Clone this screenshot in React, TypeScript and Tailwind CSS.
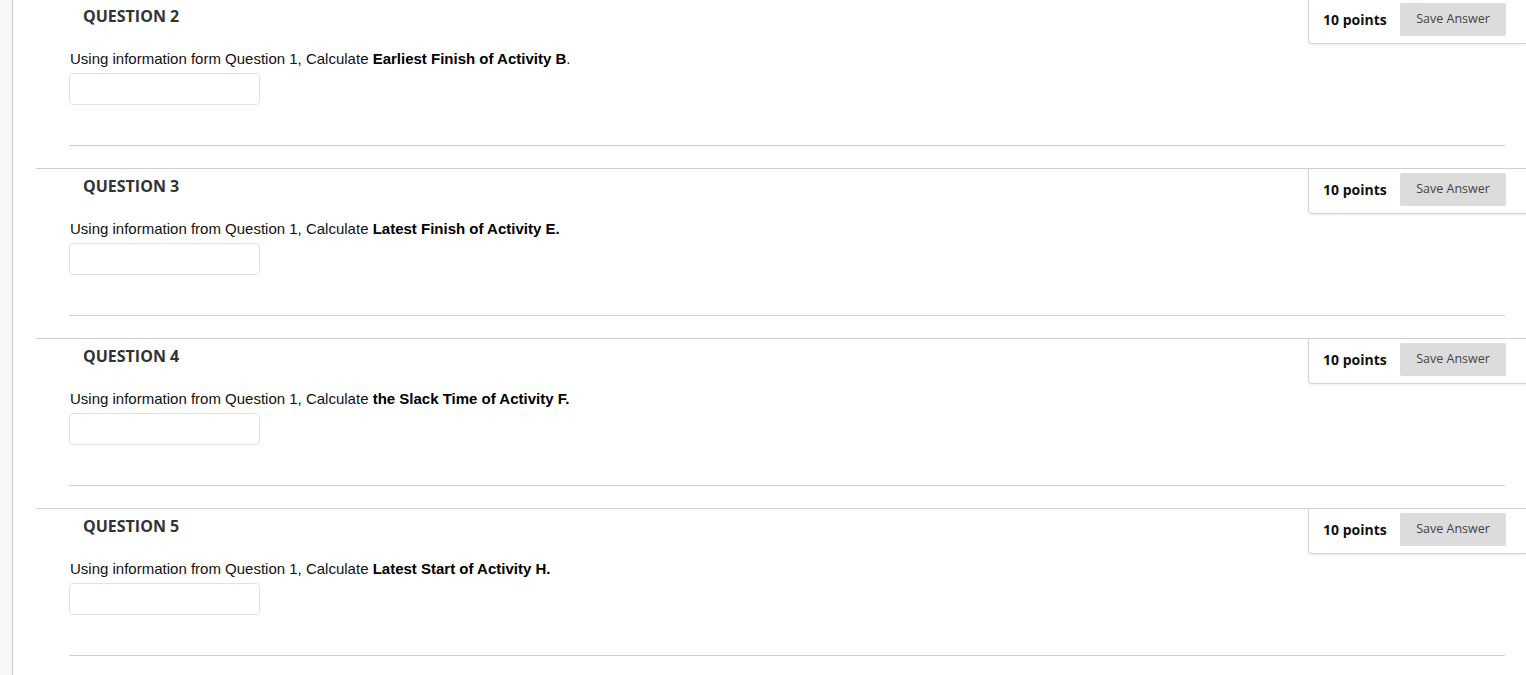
const QUESTIONS = [
  { n: 2, lead: "Using information form Question 1, Calculate ", bold: "Earliest Finish of Activity B", tail: "." },
  { n: 3, lead: "Using information from Question 1, Calculate ", bold: "Latest Finish of Activity E.", tail: "" },
  { n: 4, lead: "Using information from Question 1, Calculate ", bold: "the Slack Time of Activity F.", tail: "" },
  { n: 5, lead: "Using information from Question 1, Calculate ", bold: "Latest Start of Activity H.", tail: "" },
]

function Question({ n, lead, bold, tail }: (typeof QUESTIONS)[number]) {
  return (
    <section className="h-[170px] border-t border-[#cfcfcf]">
      <div className="flex h-[45px] items-start justify-between">
        <h2 className="ml-[47px] pt-[6px] font-['Open_Sans',sans-serif] text-[16px] leading-[22px] font-bold text-[#333]">
          QUESTION {n}
        </h2>
        <div className="flex h-[45px] w-[218px] items-start rounded-bl-[4px] border-b border-l border-[#d4d4d4] pt-[4px] pl-[14px] shadow-[0_1px_2px_rgba(0,0,0,0.08)]">
          <span className="w-[77px] font-['Open_Sans',sans-serif] text-[14px] leading-[33px] font-bold text-[#111]">
            10 points
          </span>
          <button className="h-[33px] w-[106px] rounded-[2px] bg-[#dcdcdc] font-['Open_Sans',sans-serif] text-[12.5px] text-[#444]">
            Save Answer
          </button>
        </div>
      </div>
      <div className="pr-[21px] pl-[33px]">
        <p className="mt-[5px] pl-[1px] font-['Liberation_Sans',Arial,sans-serif] text-[15px] leading-[20px] text-[#111]">
          {lead}
          <b className="text-black">{bold}</b>
          {tail}
        </p>
        <input className="mt-[4px] block h-[32px] w-[191px] rounded-[4px] border border-[#e2e2e2] bg-white" />
        <div className="mt-[40px] h-px bg-[#cfcfcf]" />
      </div>
    </section>
  )
}

export default function App() {
  return (
    <div className="flex h-[675px] overflow-hidden bg-white">
      <div className="w-[13px] shrink-0 border-r border-[#cccccc] bg-[#f7f7f7]" />
      <div className="flex-1 pl-[23px]">
        <div className="-mt-[2px]">
          {QUESTIONS.map((q) => (
            <Question key={q.n} {...q} />
          ))}
        </div>
      </div>
    </div>
  )
}
